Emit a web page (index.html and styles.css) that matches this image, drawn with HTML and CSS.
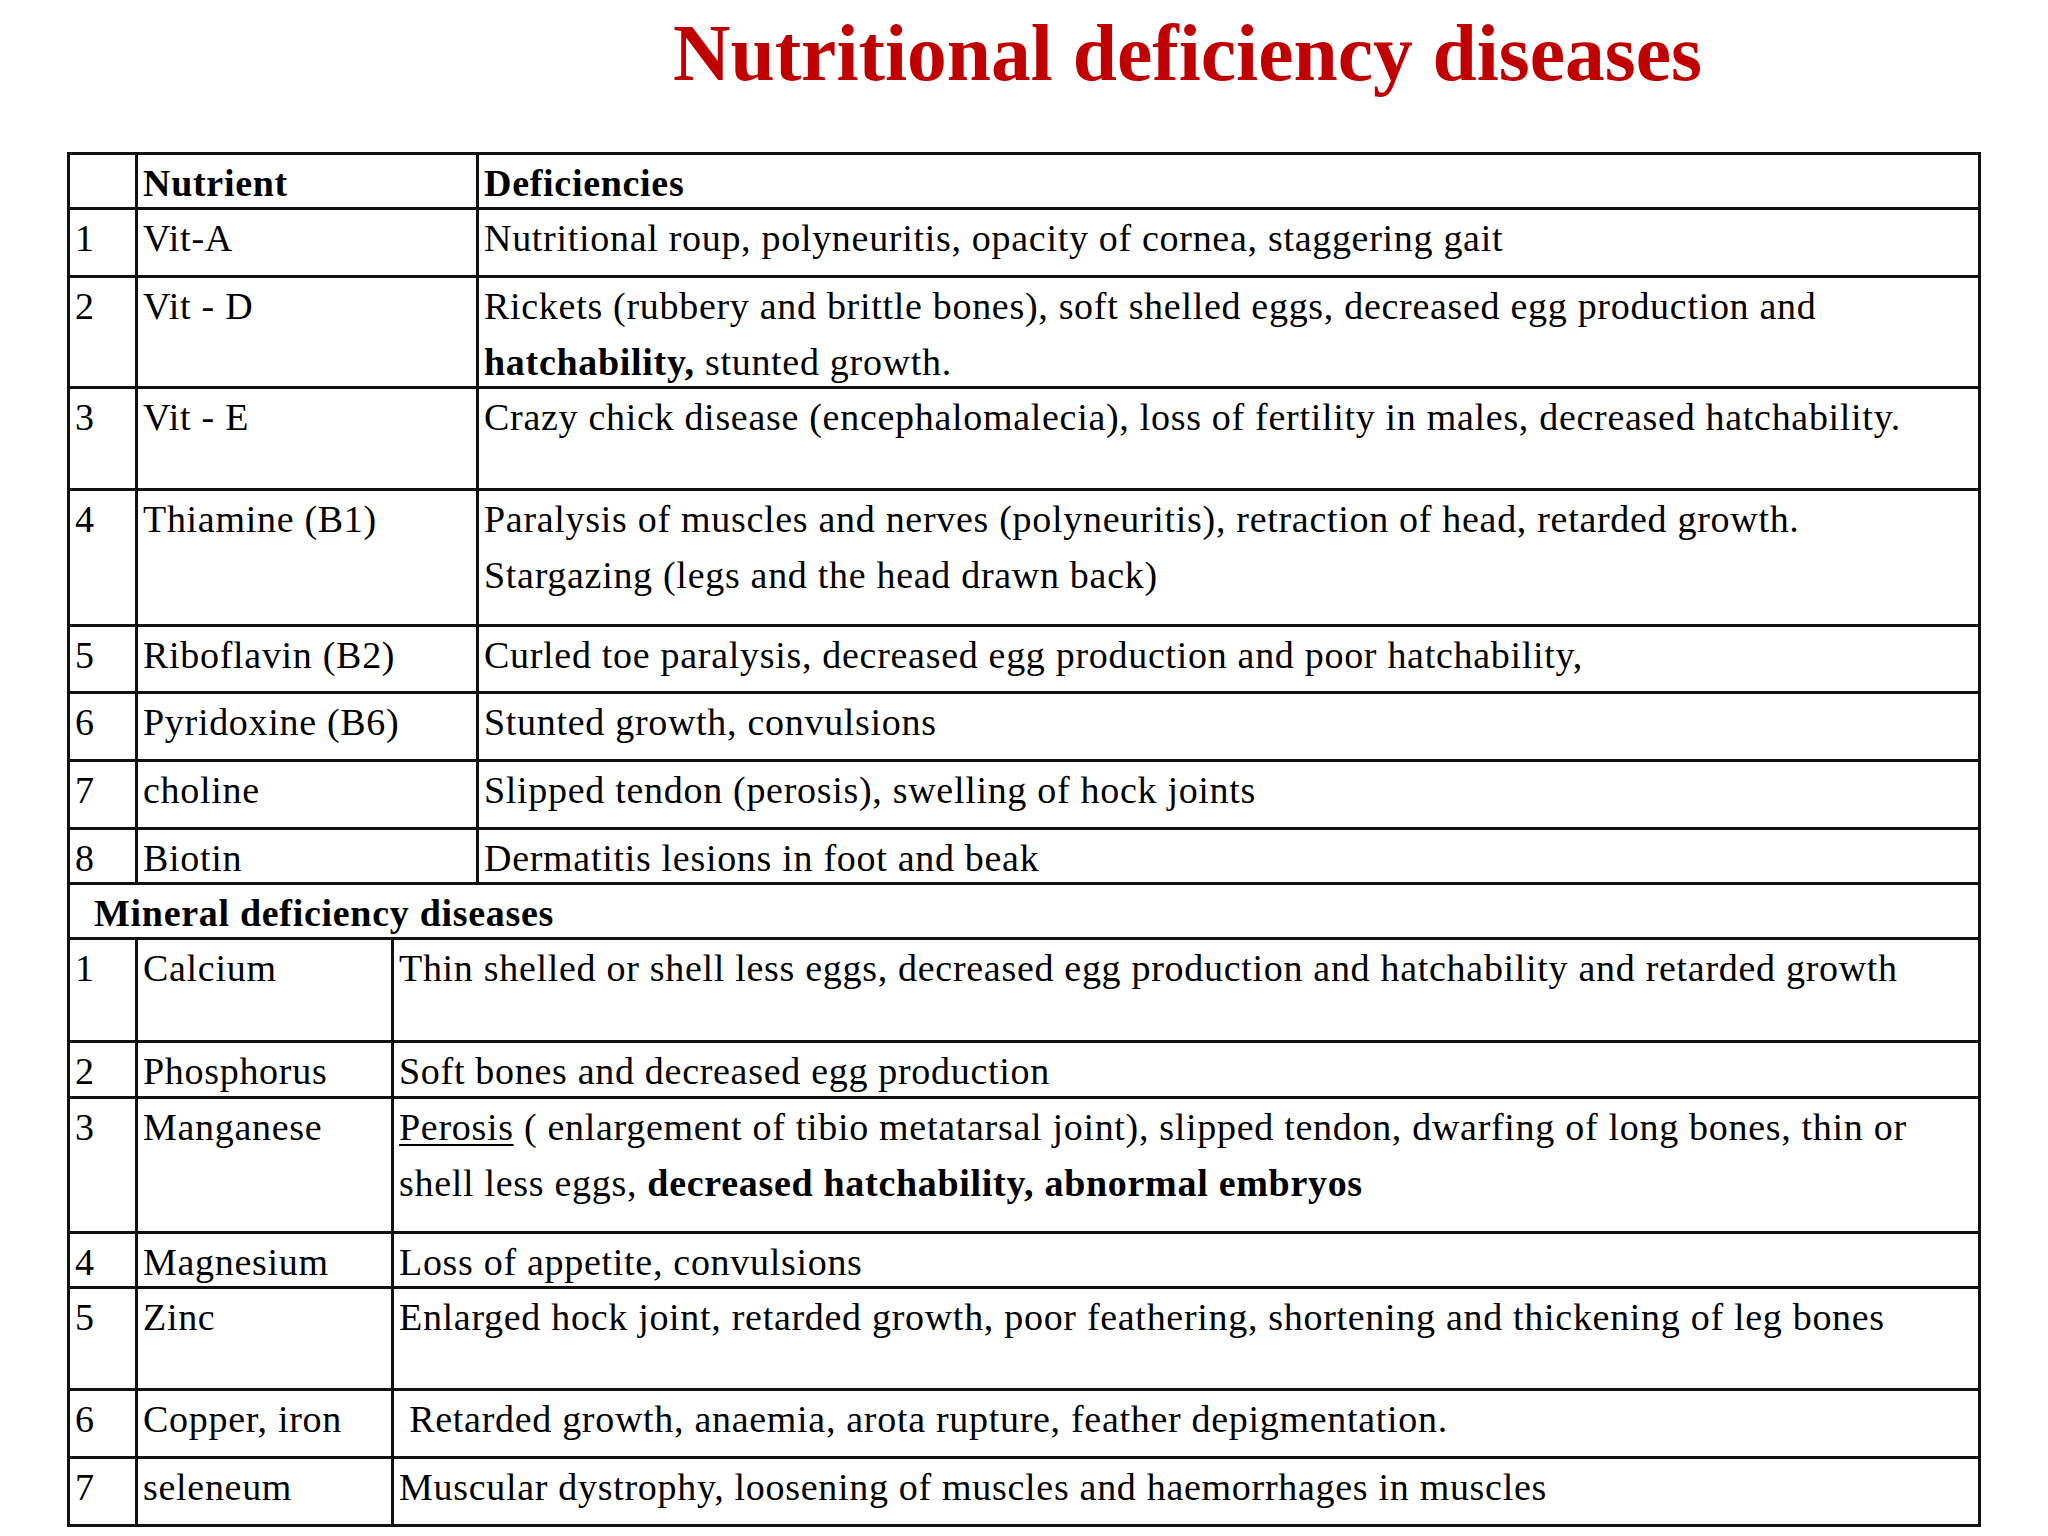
FILE: index.html
```html
<!DOCTYPE html>
<html lang="en">
<head>
<meta charset="utf-8">
<title>Nutritional deficiency diseases</title>
<link rel="stylesheet" href="styles.css">
</head>
<body>
<main class="page">
  <h1 class="title">Nutritional deficiency diseases</h1>
  <div class="table" role="table">
    <div class="cell num"></div>
    <div class="cell name wide b">Nutrient</div>
    <div class="cell desc b">Deficiencies</div>

    <div class="cell num">1</div>
    <div class="cell name wide">Vit-A</div>
    <div class="cell desc">Nutritional roup, polyneuritis, opacity of cornea, staggering gait</div>

    <div class="cell num">2</div>
    <div class="cell name wide">Vit - D</div>
    <div class="cell desc">Rickets (rubbery and brittle bones), soft shelled eggs, decreased egg production and<br><b>hatchability,</b> stunted growth.</div>

    <div class="cell num">3</div>
    <div class="cell name wide">Vit - E</div>
    <div class="cell desc">Crazy chick disease (encephalomalecia), loss of fertility in males, decreased hatchability.</div>

    <div class="cell num">4</div>
    <div class="cell name wide">Thiamine (B1)</div>
    <div class="cell desc">Paralysis of muscles and nerves (polyneuritis), retraction of head, retarded growth.<br>Stargazing (legs and the head drawn back)</div>

    <div class="cell num">5</div>
    <div class="cell name wide">Riboflavin (B2)</div>
    <div class="cell desc">Curled toe paralysis, decreased egg production and poor hatchability,</div>

    <div class="cell num">6</div>
    <div class="cell name wide">Pyridoxine (B6)</div>
    <div class="cell desc">Stunted growth, convulsions</div>

    <div class="cell num">7</div>
    <div class="cell name wide">choline</div>
    <div class="cell desc">Slipped tendon (perosis), swelling of hock joints</div>

    <div class="cell num">8</div>
    <div class="cell name wide">Biotin</div>
    <div class="cell desc">Dermatitis lesions in foot and beak</div>

    <div class="cell section b">Mineral deficiency diseases</div>

    <div class="cell num">1</div>
    <div class="cell name">Calcium</div>
    <div class="cell desc wide">Thin shelled or shell less eggs, decreased egg production and hatchability and retarded growth</div>

    <div class="cell num">2</div>
    <div class="cell name">Phosphorus</div>
    <div class="cell desc wide">Soft bones and decreased egg production</div>

    <div class="cell num">3</div>
    <div class="cell name">Manganese</div>
    <div class="cell desc wide"><u>Perosis</u> ( enlargement of tibio metatarsal joint), slipped tendon, dwarfing of long bones, thin or<br>shell less eggs, <b>decreased hatchability, abnormal embryos</b></div>

    <div class="cell num">4</div>
    <div class="cell name">Magnesium</div>
    <div class="cell desc wide">Loss of appetite, convulsions</div>

    <div class="cell num">5</div>
    <div class="cell name">Zinc</div>
    <div class="cell desc wide">Enlarged hock joint, retarded growth, poor feathering, shortening and thickening of leg bones</div>

    <div class="cell num">6</div>
    <div class="cell name">Copper, iron</div>
    <div class="cell desc wide">&nbsp;Retarded growth, anaemia, arota rupture, feather depigmentation.</div>

    <div class="cell num">7</div>
    <div class="cell name">seleneum</div>
    <div class="cell desc wide">Muscular dystrophy, loosening of muscles and haemorrhages in muscles</div>
  </div>
</main>
</body>
</html>
```

FILE: styles.css
```css
html, body {
  margin: 0;
  padding: 0;
  background: #ffffff;
}

.page {
  padding: 0 0 0 67px;
  font-family: "Liberation Serif", "Times New Roman", serif;
  color: #000;
}

.title {
  margin: 0 0 54px 0;
  padding: 8px 0 0 606px;
  font-size: 79.5px;
  line-height: 90px;
  font-weight: bold;
  color: #c00000;
  white-space: nowrap;
}

.table {
  display: grid;
  width: 1914px;
  box-sizing: border-box;
  grid-template-columns: 65px 253px 82px 1499px;
  grid-template-rows: 52px 65px 108px 99px 133px 64px 65px 65px 52px 52px 100px 53px 132px 52px 99px 65px 65px;
  gap: 3px;
  padding: 3px;
  background: #111;
}

.cell {
  background: #fff;
  font-size: 38px;
  letter-spacing: 0.7px;
  line-height: 56px;
  padding: 0 0 0 5px;
  white-space: nowrap;
  min-width: 0;
}

.b, .cell b {
  font-weight: bold;
}

.name.wide {
  grid-column: span 2;
}

.desc.wide {
  grid-column: span 2;
}

.section {
  grid-column: 1 / -1;
  padding-left: 24px;
}

.cell u {
  text-decoration-thickness: 2px;
  text-underline-offset: 4px;
}
```
